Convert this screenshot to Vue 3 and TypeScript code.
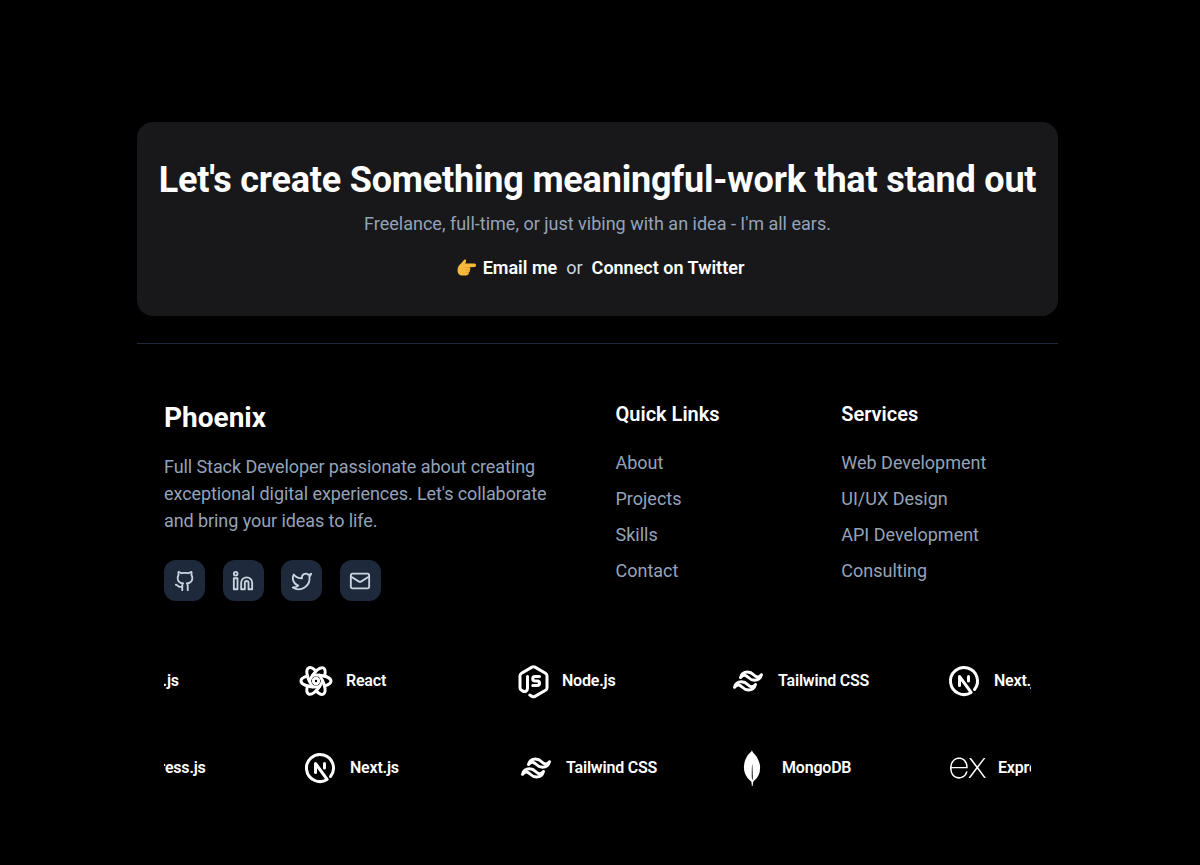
<script setup lang="ts">
interface TechItem {
  name: string;
  icon: string;
}

const quickLinks = ['About', 'Projects', 'Skills', 'Contact'];
const services = ['Web Development', 'UI/UX Design', 'API Development', 'Consulting'];

const topRow: TechItem[] = [
  { name: 'Next.js', icon: 'next' },
  { name: 'React', icon: 'react' },
  { name: 'Node.js', icon: 'node' },
  { name: 'Tailwind CSS', icon: 'tailwind' },
  { name: 'Next.js', icon: 'next' },
];

const bottomRow: TechItem[] = [
  { name: 'Express.js', icon: 'express' },
  { name: 'Next.js', icon: 'next' },
  { name: 'Tailwind CSS', icon: 'tailwind' },
  { name: 'MongoDB', icon: 'mongo' },
  { name: 'Express.js', icon: 'express' },
];
</script>

<template>
  <div class="page">
    <section class="cta-card">
      <h2>Let's create Something meaningful-work that stand out</h2>
      <p class="cta-sub">Freelance, full-time, or just vibing with an idea - I'm all ears.</p>
      <div class="cta-links">
        <svg class="hand" viewBox="0 0 19 17" width="19" height="17">
          <path fill="#f6b93b" d="M.5 11C.5 8 2 6 4 4.500L7 1c1-1 2.500 0 2 1.500l-.7 2.100h9.200c2 0 2 3.400 0 3.400l-4.500.3c.5 1.200.3 2.200-.2 2.700.2 1 0 2-.8 2.500 0 1.500-1 2.500-2.500 3H5c-3 0-4.500-2.500-4.500-5.500z" />
          <path fill="none" stroke="#d8932a" stroke-width=".7" d="M8 8.500h5M8.500 11h4.300M8.500 13.500h3.500" />
        </svg>
        <a>Email me</a>
        <span>or</span>
        <a>Connect on Twitter</a>
      </div>
    </section>

    <div class="divider"></div>

    <footer class="footer">
      <div class="brand">
        <h3>Phoenix</h3>
        <p>Full Stack Developer passionate about creating exceptional digital experiences. Let's collaborate and bring your ideas to life.</p>
        <div class="socials">
          <a class="social">
            <svg viewBox="0 0 24 24"><path d="M15 22v-4a4.800 4.800 0 0 0-1-3.500c3 0 6-2 6-5.500.08-1.250-.27-2.480-1-3.500.28-1.150.28-2.350 0-3.500 0 0-1 0-3 1.500-2.640-.5-5.360-.5-8 0C6 2 5 2 5 2c-.3 1.150-.3 2.350 0 3.500A5.403 5.403 0 0 0 4 9c0 3.500 3 5.500 6 5.500-.39.49-.68 1.050-.85 1.650-.17.6-.22 1.230-.15 1.850v4" /><path d="M9 18c-4.510 2-5-2-7-2" /></svg>
          </a>
          <a class="social">
            <svg viewBox="0 0 24 24"><path d="M16 8a6 6 0 0 1 6 6v7h-4v-7a2 2 0 0 0-2-2 2 2 0 0 0-2 2v7h-4v-7a6 6 0 0 1 6-6z" /><rect x="2" y="9" width="4" height="12" /><circle cx="4" cy="4" r="2" /></svg>
          </a>
          <a class="social">
            <svg viewBox="0 0 24 24"><path d="M22 4s-.7 2.100-2 3.400c1.600 10-9.400 17.300-18 11.600 2.200.1 4.400-.6 6-2C3 15.500.5 9.600 3 5c2.200 2.600 5.600 4.100 9 4-.9-4.200 4-6.600 7-3.800 1.100 0 3-1.200 3-1.200z" /></svg>
          </a>
          <a class="social">
            <svg viewBox="0 0 24 24"><rect x="2" y="4" width="20" height="16" rx="2" /><path d="m22 7-8.970 5.700a1.940 1.940 0 0 1-2.060 0L2 7" /></svg>
          </a>
        </div>
      </div>

      <div class="link-col">
        <h4>Quick Links</h4>
        <a v-for="link in quickLinks" :key="link">{{ link }}</a>
      </div>

      <div class="link-col">
        <h4>Services</h4>
        <a v-for="link in services" :key="link">{{ link }}</a>
      </div>
    </footer>

    <div class="marquee">
      <div
        v-for="(row, i) in [topRow, bottomRow]"
        :key="i"
        class="track"
        :class="i === 0 ? 'track-top' : 'track-bottom'"
      >
        <div v-for="(item, j) in row" :key="j" class="tech">
          <svg class="tech-icon" viewBox="0 0 24 24">
            <template v-if="item.icon === 'next'">
              <path d="M9 15v-6l7.745 10.650a9 9 0 1 1 2.255-1.993" />
              <path d="M15 12v-3" />
            </template>
            <template v-else-if="item.icon === 'react'">
              <path d="M6.306 8.711c-2.602.723-4.306 1.926-4.306 3.289c0 2.210 4.477 4 10 4c.773 0 1.526-.035 2.248-.102" />
              <path d="M17.692 15.289c2.603-.722 4.308-1.926 4.308-3.289c0-2.210-4.477-4-10-4c-.773 0-1.526.035-2.250.102" />
              <path d="M6.305 15.287c-.676 2.615-.485 4.693.695 5.373c1.913 1.105 5.703-1.877 8.464-6.660c.387-.67.733-1.339 1.036-2" />
              <path d="M17.694 8.716c.677-2.616.487-4.696-.694-5.376c-1.913-1.105-5.703 1.877-8.464 6.660c-.387.67-.733 1.340-1.037 2" />
              <path d="M12 5.424c-1.925-1.892-3.820-2.766-5-2.084c-1.913 1.104-1.226 5.877 1.536 10.660c.386.670.793 1.304 1.212 1.896" />
              <path d="M12 18.574c1.926 1.893 3.821 2.768 5 2.086c1.913-1.104 1.226-5.877-1.536-10.660c-.375-.649-.78-1.283-1.212-1.897" />
              <circle cx="12" cy="12" r="1.800" />
            </template>
            <template v-else-if="item.icon === 'node'">
              <path d="M9 9v8.044a2 2 0 0 1-2.996 1.734l-1.004-.58c-.62-.358-1-1.020-1-1.734v-7.928c0-.714.38-1.376 1-1.734l7-4.042a2 2 0 0 1 2 0l7 4.042c.62.358 1 1.020 1 1.734v7.928c0 .714-.38 1.376-1 1.734l-7 4.042a2 2 0 0 1-2 0l-1.500-.866" />
              <path d="M17 9h-3a1.500 1.500 0 0 0 0 3h1.500a1.500 1.500 0 0 1 0 3h-3" />
            </template>
            <template v-else-if="item.icon === 'tailwind'">
              <path d="M11.667 6c-2.490 0-4.044 1.222-4.667 3.667c.933-1.223 2.023-1.680 3.267-1.375c.71.174 1.217.68 1.778 1.240c.916.912 1.975 1.968 4.288 1.968c2.490 0 4.044-1.222 4.667-3.667c-.933 1.223-2.023 1.680-3.267 1.375c-.71-.174-1.217-.68-1.778-1.240c-.916-.912-1.975-1.968-4.288-1.968zm-4 6.500c-2.490 0-4.044 1.222-4.667 3.667c.933-1.223 2.023-1.680 3.267-1.375c.71.174 1.217.68 1.778 1.240c.916.912 1.975 1.968 4.288 1.968c2.490 0 4.044-1.222 4.667-3.667c-.933 1.223-2.023 1.680-3.267 1.375c-.71-.174-1.217-.68-1.778-1.240c-.916-.912-1.975-1.968-4.288-1.968z" />
            </template>
            <template v-else-if="item.icon === 'mongo'">
              <path class="solid" d="M17.193 9.555c-1.264-5.580-4.252-7.414-4.573-8.115-.28-.394-.53-.954-.735-1.440-.036.495-.055.685-.523 1.184-.723.566-4.438 3.682-4.740 10.020-.282 5.912 4.270 9.435 4.888 9.884l.07.05A73.490 73.490 0 0111.910 24h.481c.114-1.032.284-2.056.51-3.070.417-.296.604-.463.85-.693a11.342 11.342 0 003.639-8.464c.01-.814-.103-1.662-.197-2.218zm-5.336 8.195s0-8.291.275-8.290c.213 0 .49 10.695.49 10.695-.381-.045-.765-1.760-.765-2.405z" />
            </template>
            <template v-else>
              <path class="solid" d="M24 18.588a1.529 1.529 0 01-1.895-.72l-3.450-4.771-.5-.667-4.003 5.444a1.466 1.466 0 01-1.802.708l5.158-6.920-4.798-6.251a1.595 1.595 0 011.900.666l3.576 4.830 3.596-4.810a1.435 1.435 0 011.788-.668L21.708 7.900l-2.522 3.283a.666.666 0 000 .994l4.804 6.412zM.002 11.576l.42-2.075c1.154-4.103 5.858-5.810 9.094-3.270 1.895 1.489 2.368 3.597 2.275 5.973H1.116C.943 16.447 4.005 19.009 7.920 17.700a4.078 4.078 0 002.582-2.876c.207-.666.548-.78 1.174-.588a5.417 5.417 0 01-2.589 3.957 6.272 6.272 0 01-7.306-.933 6.575 6.575 0 01-1.640-3.858c0-.235-.08-.455-.134-.666A88.330 88.330 0 010 11.577zm1.127-.286h9.654c-.06-3.076-2.001-5.258-4.590-5.278-2.882-.04-4.944 2.094-5.071 5.264z" />
            </template>
          </svg>
          <span>{{ item.name }}</span>
        </div>
      </div>
    </div>
  </div>
</template>

<style>
html,
body {
  background: #000;
}
</style>

<style scoped>
.page {
  width: 921px;
  margin-left: 137px;
  padding: 122px 0 64px;
  font-family: Roboto, "Noto Sans", Arial, sans-serif;
  color: #fff;
}

.cta-card {
  padding: 36px 0 35px;
  background: #18181b;
  border-radius: 16px;
  text-align: center;
}

.cta-card h2 {
  margin: 0;
  font-size: 36px;
  line-height: 44px;
  font-weight: 700;
  letter-spacing: -0.2px;
  white-space: nowrap;
}

.cta-sub {
  margin: 8px 0 0;
  font-size: 18px;
  line-height: 27px;
  color: #94a3b8;
}

.cta-links {
  display: flex;
  justify-content: center;
  align-items: center;
  gap: 9px;
  margin-top: 17px;
  padding-left: 6px;
  font-size: 18px;
  line-height: 27px;
  color: #cbd5e1;
}

.cta-links a {
  color: #fff;
  font-weight: 600;
}

.hand {
  flex: none;
  margin-right: -2px;
}

.divider {
  height: 1px;
  margin-top: 27px;
  background: #1e293b;
}

.footer {
  display: grid;
  grid-template-columns: repeat(4, 1fr);
  column-gap: 36px;
  padding: 55px 27px 0;
}

.brand {
  grid-column: span 2;
  padding-top: 3px;
}

.brand h3 {
  margin: 0;
  font-size: 28px;
  line-height: 32px;
  font-weight: 700;
}

.brand p {
  max-width: 392px;
  margin: 19px 0 0;
  font-size: 18px;
  line-height: 27px;
  letter-spacing: -0.08px;
  color: #94a3b8;
}

.socials {
  display: flex;
  gap: 17.67px;
  margin-top: 26px;
}

.social {
  display: flex;
  align-items: center;
  justify-content: center;
  width: 41px;
  height: 41px;
  background: #1e293b;
  border-radius: 12px;
}

.social svg {
  width: 22px;
  height: 22px;
  fill: none;
  stroke: #cbd5e1;
  stroke-width: 2;
  stroke-linecap: round;
  stroke-linejoin: round;
}

.link-col {
  display: flex;
  flex-direction: column;
  align-items: flex-start;
  padding-top: 1px;
}

.link-col h4 {
  margin: 0 0 17px;
  font-size: 20px;
  line-height: 28px;
  font-weight: 600;
}

.link-col a {
  font-size: 18px;
  line-height: 36px;
  color: #94a3b8;
}

.marquee {
  display: flex;
  flex-direction: column;
  gap: 51px;
  margin: 62px 27px 0;
  overflow: hidden;
}

.track {
  display: flex;
  width: max-content;
}

.track-top {
  transform: translateX(-82px);
}

.track-bottom {
  transform: translateX(-78px);
}

.tech {
  display: flex;
  align-items: center;
  gap: 12px;
  width: 216px;
  font-size: 16px;
  line-height: 36px;
  font-weight: 600;
  letter-spacing: -0.2px;
}

.tech-icon {
  flex: none;
  width: 36px;
  height: 36px;
  fill: none;
  stroke: #fff;
  stroke-width: 2;
  stroke-linecap: round;
  stroke-linejoin: round;
}

.tech-icon .solid {
  fill: #fff;
  stroke: none;
}
</style>
